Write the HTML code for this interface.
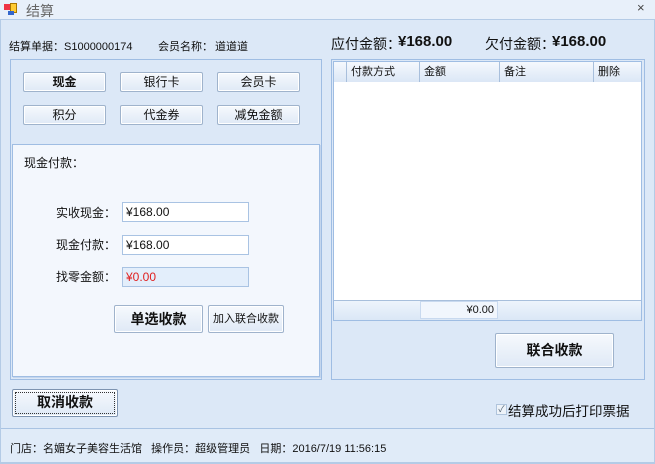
<!DOCTYPE html><html><head><meta charset="utf-8"><style>
*{margin:0;padding:0;box-sizing:border-box}
body{width:655px;height:464px;background:#dce8f7;font-family:"Liberation Sans","Noto Sans CJK SC",sans-serif;font-size:12px;color:#111;position:relative;overflow:hidden}
.a{position:absolute;white-space:nowrap}
.btn{position:absolute;border:1px solid #9fb3cc;border-radius:2px;background:linear-gradient(#f6f9fd,#dfe9f6);text-align:center;font-size:12px;box-shadow:inset 0 0 0 1px #fff}
.inp{position:absolute;border:1px solid #a9c3e3;background:#fff;padding-left:3px;font-size:12px;line-height:18px}
.th{position:absolute;top:62px;height:20px;border-right:1px solid #a8bfdc;background:linear-gradient(#f5f8fd,#dbe7f6);line-height:20px;padding-left:4px;font-size:11px}
</style></head><body>
<div class="a" style="left:0;top:0;width:655px;height:20px;background:#e8f0fa;border-bottom:1px solid #b4cbe6"></div>
<div class="a" style="left:4px;top:4px;width:6px;height:6px;background:#e34"></div>
<div class="a" style="left:10px;top:3px;width:7px;height:10px;background:#fc3;border:1px solid #a70"></div>
<div class="a" style="left:8px;top:11px;width:6px;height:4px;background:#36c"></div>
<div class="a" style="left:26px;top:1px;font-size:14px;color:#666">结算</div>
<div class="a" style="left:637px;top:0px;font-size:13px;color:#444">×</div>
<div class="a" style="left:0;top:20px;width:1px;height:444px;background:#b4cbe6"></div>
<div class="a" style="left:654px;top:20px;width:1px;height:444px;background:#b4cbe6"></div>

<div class="a" style="left:9px;top:38px;font-size:11px">结算单据：S1000000174</div>
<div class="a" style="left:158px;top:38px;font-size:11px">会员名称：</div>
<div class="a" style="left:215px;top:38px;font-size:11px">道道道</div>

<div class="a" style="left:10px;top:59px;width:312px;height:321px;border:1px solid #9fbde3"></div>
<div class="btn" style="left:23px;top:72px;width:83px;height:20px;line-height:18px;font-weight:bold">现金</div>
<div class="btn" style="left:120px;top:72px;width:83px;height:20px;line-height:18px">银行卡</div>
<div class="btn" style="left:217px;top:72px;width:83px;height:20px;line-height:18px">会员卡</div>
<div class="btn" style="left:23px;top:105px;width:83px;height:20px;line-height:18px">积分</div>
<div class="btn" style="left:120px;top:105px;width:83px;height:20px;line-height:18px">代金券</div>
<div class="btn" style="left:217px;top:105px;width:83px;height:20px;line-height:18px">减免金额</div>

<div class="a" style="left:12px;top:144px;width:308px;height:233px;background:#f3f7fd;border:1px solid #9fbde3;box-shadow:1px 1px 0 #c4d6ee"></div>
<div class="a" style="left:24px;top:154px;font-size:12px">现金付款：</div>
<div class="a" style="left:56px;top:204px;font-size:12px">实收现金：</div>
<div class="inp" style="left:122px;top:202px;width:127px;height:20px">¥168.00</div>
<div class="a" style="left:56px;top:236px;font-size:12px">现金付款：</div>
<div class="inp" style="left:122px;top:235px;width:127px;height:20px">¥168.00</div>
<div class="a" style="left:56px;top:268px;font-size:12px">找零金额：</div>
<div class="inp" style="left:122px;top:267px;width:127px;height:20px;background:#e3eefb;color:#e02020">¥0.00</div>
<div class="btn" style="left:114px;top:305px;width:89px;height:28px;line-height:26px;font-size:14px;font-weight:bold">单选收款</div>
<div class="btn" style="left:208px;top:305px;width:76px;height:28px;line-height:26px;font-size:11px">加入联合收款</div>

<div class="a" style="left:331px;top:34px;font-size:14px">应付金额：</div>
<div class="a" style="left:398px;top:33px;font-size:15px;font-weight:bold">¥168.00</div>
<div class="a" style="left:485px;top:34px;font-size:14px">欠付金额：</div>
<div class="a" style="left:552px;top:33px;font-size:15px;font-weight:bold">¥168.00</div>

<div class="a" style="left:331px;top:59px;width:314px;height:321px;border:1px solid #9fbde3"></div>
<div class="a" style="left:333px;top:61px;width:309px;height:260px;background:#fff;border:1px solid #9fbde3"></div>
<div class="th" style="left:334px;width:13px"></div>
<div class="th" style="left:347px;width:73px">付款方式</div>
<div class="th" style="left:420px;width:80px">金额</div>
<div class="th" style="left:500px;width:94px">备注</div>
<div class="th" style="left:594px;width:47px;border-right:none">删除</div>
<div class="a" style="left:334px;top:300px;width:307px;height:20px;background:linear-gradient(#eef4fc,#dbe7f6);border-top:1px solid #a8bfdc"></div>
<div class="a" style="left:420px;top:301px;width:78px;height:18px;background:#f1f6fd;border:1px solid #c8d9ef;text-align:right;padding-right:3px;line-height:16px;font-size:11px">¥0.00</div>
<div class="btn" style="left:495px;top:333px;width:119px;height:35px;line-height:33px;font-size:14px;font-weight:bold">联合收款</div>

<div class="btn" style="left:12px;top:389px;width:106px;height:28px;line-height:24px;font-size:14px;font-weight:bold;border-color:#7d93b0;outline:1px dotted #333;outline-offset:-4px">取消收款</div>
<div class="a" style="left:496px;top:404px;width:11px;height:11px;border:1px solid #b0c4dc;background:#eef3f9;font-size:9px;line-height:9px;text-align:center;color:#567">✓</div>
<div class="a" style="left:508px;top:400px;font-size:13.5px">结算成功后打印票据</div>

<div class="a" style="left:1px;top:428px;width:653px;height:1px;background:#a9c3e3"></div>
<div class="a" style="left:1px;top:429px;width:653px;height:33px;background:#e0ebf8"></div>
<div class="a" style="left:10px;top:440px;font-size:11px">门店：名媚女子美容生活馆&nbsp;&nbsp;&nbsp;操作员：超级管理员&nbsp;&nbsp;&nbsp;日期：2016/7/19 11:56:15</div>
<div class="a" style="left:0;top:462px;width:655px;height:2px;background:#b4cbe6"></div>
</body></html>
